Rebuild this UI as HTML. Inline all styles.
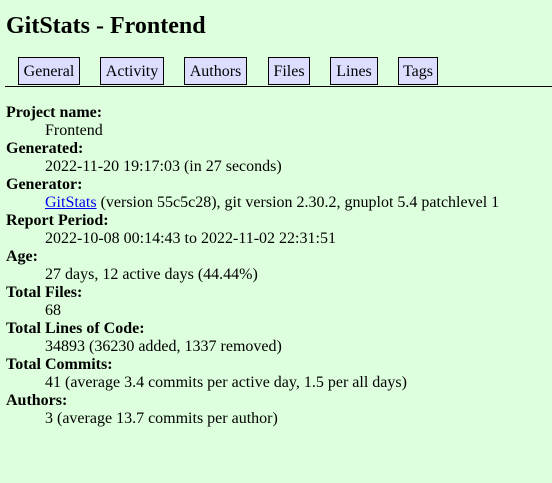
<!DOCTYPE html>
<html><head><meta charset="utf-8"><style>
body{margin:0;background:#dfd;font-family:"Liberation Serif","Times New Roman",serif;font-size:16px;color:#000;width:552px;height:483px;overflow:hidden;position:relative}
h1,.b,dl,dt,dd,a{font-family:"Liberation Serif","Times New Roman",serif}
h1{position:absolute;left:6px;top:12px;margin:0;font-size:24px;line-height:28px;font-weight:bold}
.nav{position:absolute;left:5px;right:0;top:86px;border-top:1px solid #000}
.b{position:absolute;top:57px;height:26px;border:1px solid #000;background:#ddf;text-align:center;line-height:28px;box-sizing:content-box}
dl{position:absolute;left:6px;top:104px;margin:0;line-height:18px}
dt{font-weight:bold;margin:0}
dd{margin:0 0 0 39px}
a{color:#00e;text-decoration:underline}
</style></head><body>
<h1>GitStats - Frontend</h1>
<div class="b" style="left:18px;width:60px">General</div>
<div class="b" style="left:100px;width:62px">Activity</div>
<div class="b" style="left:184px;width:61px">Authors</div>
<div class="b" style="left:268px;width:40px">Files</div>
<div class="b" style="left:330px;width:46px">Lines</div>
<div class="b" style="left:398px;width:38px">Tags</div>
<div class="nav"></div>
<dl>
<dt>Project name:</dt><dd>Frontend</dd>
<dt>Generated:</dt><dd>2022-11-20 19:17:03 (in 27 seconds)</dd>
<dt>Generator:</dt><dd><a>GitStats</a> (version 55c5c28), git version 2.30.2, gnuplot 5.4 patchlevel 1</dd>
<dt>Report Period:</dt><dd>2022-10-08 00:14:43 to 2022-11-02 22:31:51</dd>
<dt>Age:</dt><dd>27 days, 12 active days (44.44%)</dd>
<dt>Total Files:</dt><dd>68</dd>
<dt>Total Lines of Code:</dt><dd>34893 (36230 added, 1337 removed)</dd>
<dt>Total Commits:</dt><dd>41 (average 3.4 commits per active day, 1.5 per all days)</dd>
<dt>Authors:</dt><dd>3 (average 13.7 commits per author)</dd>
</dl>
</body></html>
